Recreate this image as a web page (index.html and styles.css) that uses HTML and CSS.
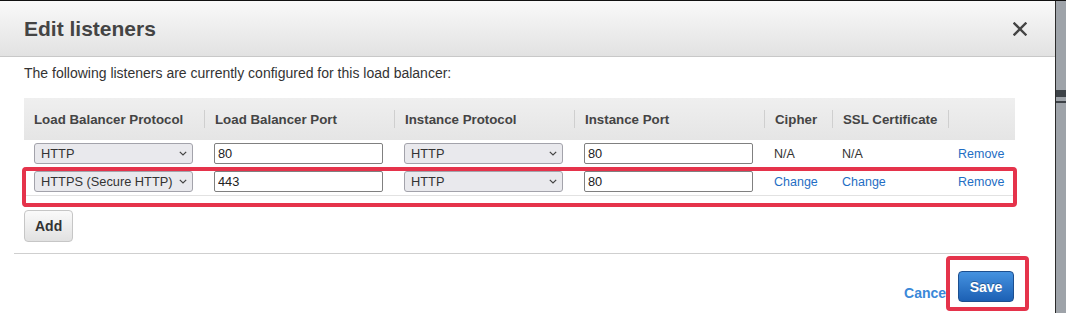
FILE: index.html
```html
<!DOCTYPE html>
<html lang="en">

<head>
  <meta charset="UTF-8">
  <title>Edit listeners</title>
  <link rel="stylesheet" href="styles.css">
</head>

<body>
  <div class="screen">
    <div class="dialog">
      <div class="dialog-header">
        <h2>Edit listeners</h2>
        <button class="close" aria-label="Close">
          <svg viewBox="0 0 14 14" width="14" height="14" fill="none" stroke="currentColor" stroke-width="2.4"
            stroke-linecap="square">
            <path d="M1.5 1.5l11 11M12.5 1.5l-11 11" /></svg>
        </button>
      </div>

      <div class="dialog-body">
        <p class="intro">The following listeners are currently configured for this load balancer:</p>

        <div class="table-wrap">
          <table class="listeners">
            <colgroup>
              <col class="c-proto">
              <col class="c-port">
              <col class="c-proto">
              <col class="c-port">
              <col class="c-cipher">
              <col class="c-cert">
              <col class="c-action">
            </colgroup>
            <thead>
              <tr>
                <th>Load Balancer Protocol</th>
                <th>Load Balancer Port</th>
                <th>Instance Protocol</th>
                <th>Instance Port</th>
                <th>Cipher</th>
                <th>SSL Certificate</th>
                <th></th>
              </tr>
            </thead>
            <tbody>
              <tr>
                <td>
                  <span class="select">
                    <select><option>HTTP</option></select>
                    <svg viewBox="0 0 8 5"><path d="M.8.8 4 4 7.2.8" /></svg>
                  </span>
                </td>
                <td><input value="80"></td>
                <td>
                  <span class="select">
                    <select><option>HTTP</option></select>
                    <svg viewBox="0 0 8 5"><path d="M.8.8 4 4 7.2.8" /></svg>
                  </span>
                </td>
                <td><input value="80"></td>
                <td>N/A</td>
                <td>N/A</td>
                <td><a href="#">Remove</a></td>
              </tr>
              <tr>
                <td>
                  <span class="select">
                    <select><option>HTTPS (Secure HTTP)</option></select>
                    <svg viewBox="0 0 8 5"><path d="M.8.8 4 4 7.2.8" /></svg>
                  </span>
                </td>
                <td><input value="443"></td>
                <td>
                  <span class="select">
                    <select><option>HTTP</option></select>
                    <svg viewBox="0 0 8 5"><path d="M.8.8 4 4 7.2.8" /></svg>
                  </span>
                </td>
                <td><input value="80"></td>
                <td><a href="#">Change</a></td>
                <td><a href="#">Change</a></td>
                <td><a href="#">Remove</a></td>
              </tr>
            </tbody>
          </table>
          <div class="mark mark-row"></div>
        </div>

        <button class="btn">Add</button>
      </div>

      <hr class="divider">

      <div class="dialog-footer">
        <a href="#" class="cancel">Cancel</a>
        <div class="mark-save">
          <button class="btn btn-primary">Save</button>
        </div>
      </div>
    </div>
    <div class="strip"></div>
  </div>
</body>

</html>
```

FILE: styles.css
```css
* {
  box-sizing: border-box;
  margin: 0;
  padding: 0;
  font-family: "Liberation Sans", Arial, Helvetica, sans-serif
}

:root {
  --text: #333;
  --heading: #444;
  --line: #d4d4d4;
  --link: #1f6ec4;
  --mark: #e5334b
}

body {
  background: #fff;
  color: var(--text);
  overflow: hidden
}

.screen {
  display: flex;
  height: 313px;
  border-top: 1px solid #111
}

.dialog {
  width: 1055px;
  background: #fff
}

.strip {
  flex: 1;
  border-left: 1px solid #2b2b2b;
  background: linear-gradient(#9ea3a9 0 89px, #3d4247 89px 96px, #9ea3a9 96px 100px, #3d4247 100px 102px, #9ea3a9 102px)
}

.dialog-header {
  display: flex;
  align-items: center;
  justify-content: space-between;
  height: 56px;
  padding: 0 28px 0 24px;
  background: linear-gradient(#f9f9f9, #e2e2e2);
  border-bottom: 1px solid #c8c8c8
}

.dialog-header h2 {
  font-size: 21px;
  font-weight: 700;
  color: var(--heading)
}

.close {
  display: flex;
  background: none;
  border: none;
  color: #444;
  cursor: pointer
}

.dialog-body {
  padding: 6px 40px 0 24px
}

.intro {
  font-size: 14px;
  line-height: 20px;
  color: var(--text);
  margin-bottom: 15px
}

.table-wrap {
  position: relative
}

.listeners {
  width: 991px;
  table-layout: fixed;
  border-collapse: collapse
}

.c-proto {
  width: 180px
}

.c-port {
  width: 190px
}

.c-cipher {
  width: 68px
}

.c-cert {
  width: 116px
}

.c-action {
  width: 67px
}

.listeners th {
  height: 42px;
  padding: 0 0 0 11px;
  text-align: left;
  font-size: 13.3px;
  font-weight: 700;
  color: var(--heading);
  white-space: nowrap;
  background: linear-gradient(#cfcfcf, #cfcfcf) left center / 1px 18px no-repeat, linear-gradient(#efefef, #e5e5e5)
}

.listeners th:first-child {
  padding-left: 10px;
  background: linear-gradient(#efefef, #e5e5e5)
}

.listeners td {
  padding: 3px 0 3px 10px;
  font-size: 12.5px;
  color: #333;
  vertical-align: middle;
  white-space: nowrap
}

.listeners tbody tr {
  border-bottom: 1px solid #e2e2e2
}

.listeners a {
  color: var(--link);
  text-decoration: none
}

.select {
  position: relative;
  display: block;
  width: 159px
}

.select select {
  display: block;
  width: 100%;
  height: 21px;
  padding: 0 0 0 6px;
  appearance: none;
  font-size: 12.8px;
  font-weight: 400;
  color: #333;
  background: #e9e9ed;
  border: 1px solid #a3a3ab;
  border-radius: 3px;
  outline: none
}

.select svg {
  position: absolute;
  right: 6px;
  top: 8px;
  width: 8px;
  height: 5px;
  fill: none;
  stroke: #444;
  stroke-width: 1.2;
  pointer-events: none
}

.listeners input {
  display: block;
  width: 169px;
  height: 21px;
  padding: 0 3px;
  font-size: 12.8px;
  color: #222;
  border: 1px solid #808080;
  border-radius: 2px;
  outline: none
}

.mark {
  position: absolute;
  border: 4px solid var(--mark);
  border-radius: 4px;
  pointer-events: none
}

.mark-row {
  top: 69px;
  left: -2px;
  width: 995px;
  height: 40px
}

.btn {
  height: 32px;
  padding: 0 10px;
  margin-top: 14px;
  font-size: 14px;
  font-weight: 700;
  color: #333;
  background: linear-gradient(#fafafa, #e1e1e1);
  border: 1px solid #c6c6c6;
  border-radius: 4px;
  cursor: pointer
}

.divider {
  margin: 11px 35px 0 14px;
  border: none;
  border-top: 1px solid #cfcfcf
}

.dialog-footer {
  display: flex;
  justify-content: flex-end;
  align-items: flex-start;
  padding: 2px 26px 0 0
}

.cancel {
  margin-top: 27px;
  font-size: 14px;
  line-height: 20px;
  font-weight: 700;
  color: #3a88d8;
  text-decoration: none
}

.mark-save {
  position: relative;
  margin-left: -4px;
  padding: 11px 11px 5px 8px;
  background: #fff;
  border: 4px solid var(--mark);
  border-radius: 4px
}

.btn-primary {
  display: block;
  width: 56px;
  height: 31px;
  margin: 0;
  padding: 0;
  color: #fff;
  text-shadow: 0 -1px 0 rgba(0, 0, 0, .3);
  background: linear-gradient(#4592e0, #1c60b4);
  border-color: #1d4f8f
}
```
